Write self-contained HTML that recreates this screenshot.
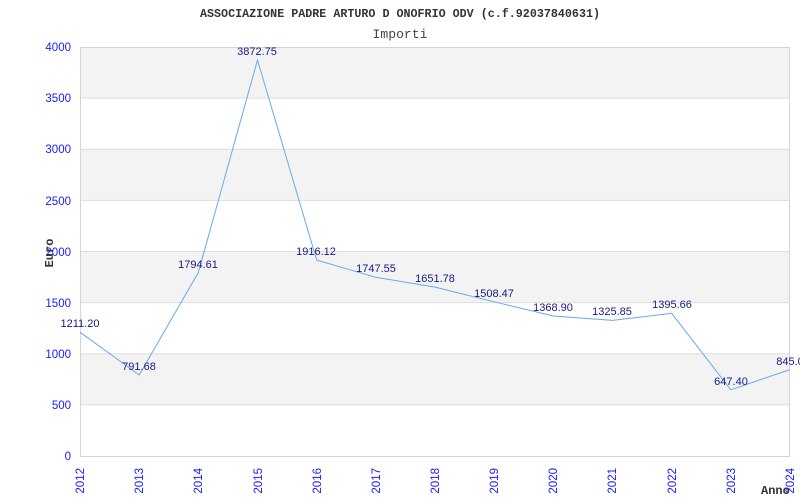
<!DOCTYPE html>
<html><head><style>html,body{margin:0;padding:0;background:#fff;}svg{display:block}</style></head>
<body>
<svg width="800" height="500" xmlns="http://www.w3.org/2000/svg">
<rect width="800" height="500" fill="#fff"/>
<text x="400" y="17" text-anchor="middle" font-family="Liberation Mono, monospace" font-size="12" font-weight="bold" fill="#333" textLength="400" lengthAdjust="spacingAndGlyphs">ASSOCIAZIONE PADRE ARTURO D ONOFRIO ODV (c.f.92037840631)</text>
<text x="400" y="38" text-anchor="middle" font-family="Liberation Mono, monospace" font-size="13" fill="#444" textLength="55" lengthAdjust="spacingAndGlyphs">Importi</text>
<g fill="#f3f3f3">
<rect x="80" y="47" width="710" height="51.1"/>
<rect x="80" y="149.2" width="710" height="51.1"/>
<rect x="80" y="251.5" width="710" height="51.1"/>
<rect x="80" y="353.7" width="710" height="51.1"/>
</g>
<g stroke="#dddddd" stroke-width="1">
<line x1="80" x2="790" y1="98.1" y2="98.1"/>
<line x1="80" x2="790" y1="149.2" y2="149.2"/>
<line x1="80" x2="790" y1="200.4" y2="200.4"/>
<line x1="80" x2="790" y1="251.5" y2="251.5"/>
<line x1="80" x2="790" y1="302.6" y2="302.6"/>
<line x1="80" x2="790" y1="353.7" y2="353.7"/>
<line x1="80" x2="790" y1="404.9" y2="404.9"/>
</g>
<rect x="80.5" y="47.5" width="709" height="409" fill="none" stroke="#d4d4d4"/>
<g font-family="Liberation Sans, sans-serif" font-size="11.5" fill="#1a1aff" text-anchor="end">
<text x="71" y="51">4000</text><text x="71" y="102">3500</text><text x="71" y="153">3000</text>
<text x="71" y="205">2500</text><text x="71" y="256">2000</text><text x="71" y="307">1500</text>
<text x="71" y="358">1000</text><text x="71" y="409">500</text><text x="71" y="460">0</text>
</g>
<text transform="translate(53,253) rotate(-90)" text-anchor="middle" font-family="Liberation Mono, monospace" font-size="12" font-weight="bold" fill="#333">Euro</text>
<text x="761" y="494" font-family="Liberation Mono, monospace" font-size="12" font-weight="bold" fill="#333">Anno</text>
<g font-family="Liberation Sans, sans-serif" font-size="11.5" fill="#1a1aff" text-anchor="end">
<text transform="translate(84,468) rotate(-90)">2012</text>
<text transform="translate(143,468) rotate(-90)">2013</text>
<text transform="translate(202,468) rotate(-90)">2014</text>
<text transform="translate(262,468) rotate(-90)">2015</text>
<text transform="translate(321,468) rotate(-90)">2016</text>
<text transform="translate(380,468) rotate(-90)">2017</text>
<text transform="translate(439,468) rotate(-90)">2018</text>
<text transform="translate(498,468) rotate(-90)">2019</text>
<text transform="translate(557,468) rotate(-90)">2020</text>
<text transform="translate(616,468) rotate(-90)">2021</text>
<text transform="translate(676,468) rotate(-90)">2022</text>
<text transform="translate(735,468) rotate(-90)">2023</text>
<text transform="translate(794,468) rotate(-90)">2024</text>
</g>
<polyline fill="none" stroke="#66aaee" stroke-width="1" points="80,332.2 139.2,375 198.3,272.5 257.5,60 316.7,260.1 375.8,277.3 435,287.1 494.2,301.8 553.3,316 612.5,320.4 671.7,313.3 730.8,389.8 790,369.6"/>
<g font-family="Liberation Sans, sans-serif" font-size="11" fill="#1a1a80" text-anchor="middle">
<text x="80" y="327">1211.20</text>
<text x="139" y="370">791.68</text>
<text x="198" y="268">1794.61</text>
<text x="257" y="55">3872.75</text>
<text x="316" y="255">1916.12</text>
<text x="376" y="272">1747.55</text>
<text x="435" y="282">1651.78</text>
<text x="494" y="297">1508.47</text>
<text x="553" y="311">1368.90</text>
<text x="612" y="315">1325.85</text>
<text x="672" y="308">1395.66</text>
<text x="731" y="385">647.40</text>
<text x="790" y="365">845.0</text>
</g>
</svg>
</body></html>
